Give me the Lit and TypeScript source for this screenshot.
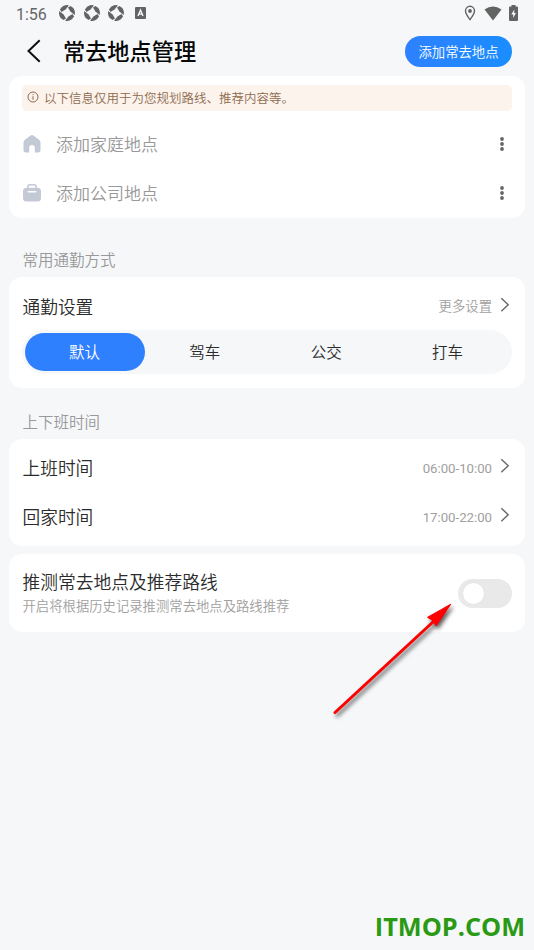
import { LitElement, html, css, svg } from "lit";
import { customElement, property, state } from "lit/decorators.js";
import { classMap } from "lit/directives/class-map.js";

const chevron = html`<svg class="chev" width="10" height="16" viewBox="0 0 10 16" fill="none" stroke="#686868" stroke-width="1.4">
  <path d="M1.3 1.2L8.2 7.7L1.3 14.2" />
</svg>`;

const dots = html`<svg class="dots" width="6" height="16" viewBox="0 0 6 16" fill="#666">
  <circle cx="3" cy="3" r="1.9" /><circle cx="3" cy="8" r="1.9" /><circle cx="3" cy="13" r="1.9" />
</svg>`;

const shutter = html`<svg width="16" height="16" viewBox="0 0 16 16" fill="#636363">
  ${[0, 90, 180, 270].map(
    (a) => svg`<path transform="rotate(${a} 8 8)" d="M3.1 1.700A8 8 0 0 1 9.900 .300L6.600 4.600L2.500 7L.900 4.500Z" />`
  )}
</svg>`;

@customElement("status-bar")
class StatusBar extends LitElement {
  static styles = css`
    :host { display: flex; height: 27px; align-items: center; padding: 0 16px; box-sizing: border-box; color: #666; }
    .time { font: 400 16px/27px Roboto, sans-serif; width: 43px; padding-top: 1px; }
    .apps { display: flex; gap: 8.600px; align-items: center; margin-top: -1px; }
    .apps svg, .system svg { display: block; }
    .letter { margin-left: 2px; }
    .system { display: flex; align-items: center; margin-left: auto; margin-top: -1px; }
    .wifi { margin: 0 7px 0 8px; }
  `;
  render() {
    return html`
      <div class="time">1:56</div>
      <div class="apps">
        ${shutter}${shutter}${shutter}
        <svg class="letter" width="11" height="12" viewBox="0 0 11 12">
          <rect width="11" height="12" rx="1" fill="#636363" />
          <path d="M3 9L5.5 3L8 9M3.9 7.1H7.1" fill="none" stroke="#f5f7f9" stroke-width="1.4" />
        </svg>
      </div>
      <div class="system">
        <svg width="12" height="16" viewBox="0 0 12 16" fill="none" stroke="#636363" stroke-width="1.4">
          <path d="M6 14.6C3.4 11.2 1.5 8.5 1.5 6a4.5 4.7 0 0 1 9 0C10.500 8.500 8.600 11.200 6 14.600Z" />
          <circle cx="6" cy="6" r="1.9" fill="#636363" stroke="none" />
        </svg>
        <svg class="wifi" width="18" height="15" viewBox="0 0 18 15"><path d="M.5 3.500Q9-2.600 17.500 3.500L9 14.500Z" fill="#636363" /></svg>
        <svg width="9" height="16" viewBox="0 0 9 16">
          <path d="M2.500 0H6.500V1.500H8Q9 1.500 9 2.500V15Q9 16 8 16H1Q0 16 0 15V2.500Q0 1.500 1 1.500H2.500Z" fill="#636363" />
          <path d="M5.300 4.500L2.300 9.400H4.200V13L6.900 8.100H5.200Z" fill="#f5f7f9" />
        </svg>
      </div>
    `;
  }
}

@customElement("place-row")
class PlaceRow extends LitElement {
  @property() kind = "home";
  @property() label = "";
  static styles = css`
    :host { display: flex; align-items: center; height: 49px; color: #999; font-size: 17px; }
    .icon { width: 20px; height: 20px; margin-right: 14px; flex: none; }
    .label { flex: 1; margin-top: -2px; }
    .dots { margin-right: 7px; margin-top: -1px; }
  `;
  render() {
    const home = svg`<path d="M8.200 1.700Q10 .500 11.800 1.700L17.300 6.100Q18.500 7 18.500 8.500V16Q18.500 18.500 16 18.500H12.800V13.800A2.800 2.800 0 0 0 7.200 13.800V18.500H4Q1.500 18.500 1.500 16V8.500Q1.500 7 2.700 6.100Z" fill="#c4c9d6" />`;
    const work = svg`<path d="M5.800 5V4Q5.800 1.800 8 1.800H12Q14.200 1.800 14.200 4V5" fill="none" stroke="#c4c9d6" stroke-width="1.500" />
      <rect x="1" y="4.700" width="18" height="13.800" rx="3.500" fill="#c4c9d6" />
      <path d="M6.300 8.800H13.700" stroke="#fff" stroke-width="1.400" stroke-linecap="round" />`;
    return html`<svg class="icon" viewBox="0 0 20 20">${this.kind === "home" ? home : work}</svg>
      <span class="label">${this.label}</span>${dots}`;
  }
}

@customElement("setting-row")
class SettingRow extends LitElement {
  @property() label = "";
  @property() value = "";
  static styles = css`
    :host { display: flex; align-items: center; height: 49px; font-size: 17.700px; color: #2b2b2b; }
    .label { flex: 1; margin-left: .5px; }
    .value { font-size: 13.350px; font-weight: 350; color: #a0a0a0; margin: -2px 8px 0 0; }
    .value.digits { font-weight: 400; font-size: 13.200px; margin-top: 2px; }
    .chev { margin-right: 2px; margin-top: -2px; }
  `;
  render() {
    return html`<span class="label">${this.label}</span
      ><span class=${classMap({ value: true, digits: /\d/.test(this.value) })}>${this.value}</span>${chevron}`;
  }
}

@customElement("app-root")
class AppRoot extends LitElement {
  @state() mode = 0;
  modes = ["默认", "驾车", "公交", "打车"];

  static styles = css`
    :host {
      display: block; position: relative; height: 950px; overflow: hidden; background: #f5f7f9;
      font-family: Roboto, "Noto Sans CJK SC", sans-serif; font-weight: 350; color: #2b2b2b;
    }
    .header { display: flex; align-items: center; height: 49px; padding: 0 22px 0 26px; box-sizing: border-box; }
    .back { margin-right: 21px; margin-top: -1px; }
    .title { flex: 1; margin: 0; font-size: 22.200px; font-weight: 500; line-height: 32px; color: #080808; }
    .add {
      width: 107px; height: 31px; margin-top: -1px; padding: 0; border: 0; border-radius: 16px; color: #fff;
      font: inherit; font-size: 13.350px; background: linear-gradient(110deg, #2f80ff, #188eff);
    }
    .card { margin: 0 9px; padding: 0 13px; border-radius: 13px; background: #fff; box-sizing: border-box; }
    .places { height: 141.500px; padding-top: 8.500px; }
    .notice {
      display: flex; align-items: center; height: 26px; margin: 0 0 9px; padding-left: 5px; gap: 5px;
      border-radius: 5px; background: #fdf3ed; color: #8c6b4d; font-size: 12.500px; box-sizing: border-box;
    }
    .notice span { margin-top: -1px; }
    .notice svg { margin-top: -1px; }
    .section { margin: 0; padding: 0 22.500px; font-size: 15.500px; font-weight: 350; color: #999; line-height: 24px; }
    .commute { padding-top: 4.500px; height: 111px; }
    .first { padding-top: 31.500px; height: 59.500px; box-sizing: border-box; }
    .second { padding-top: 23px; height: 50.500px; box-sizing: border-box; }
    .tabs {
      display: flex; height: 44px; margin-top: -.5px; padding: 3px; border-radius: 22px; background: #f5f7f9;
      box-sizing: border-box; justify-content: space-between;
    }
    .tab {
      width: 120px; height: 38px; margin-top: -.5px; border: 0; border-radius: 19px; padding: 0 3px 1px 0; background: none;
      font: inherit; font-size: 15.500px; color: #2b2b2b;
    }
    .tab.on { background: #2f80ff; color: #fff; padding-right: 1px; }
    .times { height: 107px; padding-top: 4px; }
    .guess { display: flex; align-items: center; height: 77.500px; margin-top: 8.500px; }
    .text { flex: 1; margin: 2px 0 0 .5px; }
    .name { font-size: 17.750px; line-height: 24px; }
    .hint { font-size: 13.350px; line-height: 20px; margin-top: 2px; color: #a0a0a0; }
    .switch { width: 54px; height: 29px; margin-top: 1px; border-radius: 15px; background: #e9e9e9; padding: 4px 5px; box-sizing: border-box; }
    .knob { width: 21px; height: 21px; border-radius: 50%; background: #fff; box-shadow: 0 0 2px rgba(0, 0, 0, 0.06); }
    .arrow { position: absolute; left: 320px; top: 590px; filter: drop-shadow(2px 3px 2px rgba(0, 0, 0, 0.65)); }
    .mark { position: absolute; right: 9px; bottom: 7px; font: 700 25.300px/34px "Open Sans", sans-serif; color: #2a9914; }
  `;

  render() {
    return html`
      <status-bar></status-bar>
      <div class="header">
        <svg class="back" width="16" height="24" viewBox="0 0 16 24" fill="none" stroke="#111" stroke-width="2">
          <path d="M13.700 1.300L2.500 12L13.700 22.700" />
        </svg>
        <h1 class="title">常去地点管理</h1>
        <button class="add">添加常去地点</button>
      </div>
      <div class="card places">
        <div class="notice">
          <svg width="12" height="12" viewBox="0 0 12 12" fill="none" stroke="#8c6b4d">
            <circle cx="6" cy="6" r="5" /><path d="M6 5.200V8.800M6 3.200V4.200" />
          </svg>
          <span>以下信息仅用于为您规划路线、推荐内容等。</span>
        </div>
        <place-row kind="home" label="添加家庭地点"></place-row>
        <place-row kind="work" label="添加公司地点"></place-row>
      </div>
      <h2 class="section first">常用通勤方式</h2>
      <div class="card commute">
        <setting-row label="通勤设置" value="更多设置"></setting-row>
        <div class="tabs">
          ${this.modes.map(
            (m, i) => html`<button class=${classMap({ tab: true, on: i === this.mode })} @click=${() => (this.mode = i)}>${m}</button>`
          )}
        </div>
      </div>
      <h2 class="section second">上下班时间</h2>
      <div class="card times">
        <setting-row label="上班时间" value="06:00-10:00"></setting-row>
        <setting-row label="回家时间" value="17:00-22:00"></setting-row>
      </div>
      <div class="card guess">
        <div class="text">
          <div class="name">推测常去地点及推荐路线</div>
          <div class="hint">开启将根据历史记录推测常去地点及路线推荐</div>
        </div>
        <div class="switch"><div class="knob"></div></div>
      </div>
      <svg class="arrow" width="150" height="140" viewBox="0 0 150 140">
        <path d="M15 122.500L114 31" stroke="#f00" stroke-width="3" stroke-linecap="round" />
        <path d="M130.800 14.200L116 36L113.500 31L107.500 27.300Z" fill="#f00" stroke="#f00" />
      </svg>
      <div class="mark">ITMOP.COM</div>
    `;
  }
}
